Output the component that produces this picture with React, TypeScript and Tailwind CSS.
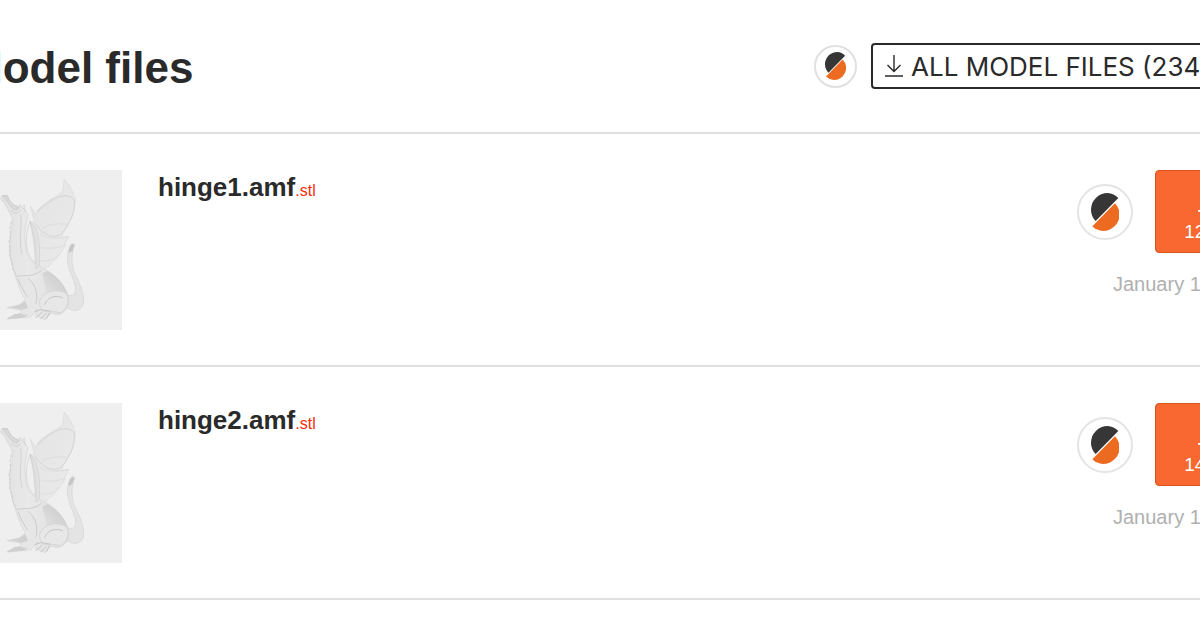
type ModelFile = {
  name: string;
  ext: string;
  size: string;
  date: string;
};

const files: ModelFile[] = [
  { name: 'hinge1.amf', ext: '.stl', size: '12 kB', date: 'January 13, 2022' },
  { name: 'hinge2.amf', ext: '.stl', size: '14 kB', date: 'January 13, 2022' },
];

function SlicerLogo({ className }: { className?: string }) {
  return (
    <svg viewBox="0 0 86 114" className={className} aria-hidden="true">
      <path d="M14 84A49 49 0 0 1 0 50A50 50 0 0 1 50 0A49 49 0 0 1 82 15Z" fill="#363636" />
      <path d="M72 31A49 49 0 0 1 86 64A50 50 0 0 1 36 114A49 49 0 0 1 4 100Z" fill="#ed6b21" />
    </svg>
  );
}

function DownloadIcon({ className }: { className?: string }) {
  return (
    <svg
      viewBox="0 0 18 22"
      fill="none"
      stroke="currentColor"
      strokeWidth="1.4"
      className={className}
      aria-hidden="true"
    >
      <path d="M9 0V16M2.5 10L9 16.5L15.5 10M0 21H18" />
    </svg>
  );
}

function DragonPreview() {
  return (
    <svg viewBox="-114 15 480 480" className="size-40 shrink-0 bg-[#efefef]" aria-hidden="true">
      <defs>
        <linearGradient id="body" x1="0" y1="0" x2="1" y2="0">
          <stop offset="0" stopColor="#e0e0e0" />
          <stop offset="0.4" stopColor="#e9e9e9" />
          <stop offset="1" stopColor="#dedede" />
        </linearGradient>
        <linearGradient id="wing" x1="0" y1="0" x2="1" y2="1">
          <stop offset="0" stopColor="#e3e3e3" />
          <stop offset="1" stopColor="#ebebeb" />
        </linearGradient>
        <linearGradient id="back" x1="1" y1="0" x2="0" y2="1">
          <stop offset="0" stopColor="#c6c6c6" />
          <stop offset="1" stopColor="#e4e4e4" />
        </linearGradient>
      </defs>
      <g strokeLinecap="round" strokeLinejoin="round">
        <path
          d="M116 132C138 108 172 94 186 82C193 68 189 54 193 43C207 57 220 82 226 103C225 140 211 173 187 205L186 219L206 214L193 240L196 241C181 268 157 296 123 322L104 300C94 260 88 210 88 172L104 170L91 124L106 146Z"
          fill="url(#wing)"
          stroke="#dadada"
          strokeWidth="2"
        />
        <path d="M112 140C142 112 194 72 222 104C228 140 211 170 187 205C160 224 130 212 106 176" fill="none" stroke="#d4d4d4" strokeWidth="3" />
        <path d="M122 208C140 222 166 222 204 215M124 248C150 252 174 248 195 241M122 288C146 290 166 284 178 268M128 190C144 178 168 174 202 178" fill="none" stroke="#d8d8d8" strokeWidth="2" />
        <path
          d="M216 236C204 248 200 276 204 296C210 330 232 360 226 382C220 396 206 392 196 386L204 430C226 442 244 436 250 416C254 388 240 356 226 330C214 304 212 270 224 240Z"
          fill="#e4e4e4"
          stroke="#d3d3d3"
          strokeWidth="2"
        />
        <path d="M216 236C209 243 206 252 206 264L217 258L224 240Z" fill="#c6c6c6" />
        <path
          d="M8 92L22 92C28 104 34 116 44 121L58 125L60 117L66 128L73 119L76 140L84 148L78 178C72 204 74 240 82 268C90 284 102 296 112 300L140 316C170 334 194 358 204 392C212 416 200 438 182 446C164 454 158 440 150 446L136 464L106 452L112 432L92 456L22 462L42 450L66 446L64 436L22 428L58 420L76 404C62 384 54 360 46 332C34 300 26 262 30 226C34 196 40 178 36 156L14 116L2 102Z"
          fill="url(#body)"
          stroke="#d3d3d3"
          strokeWidth="2"
        />
        <path d="M90 172C78 196 76 232 84 262C90 276 96 288 106 292C104 252 100 206 90 172Z" fill="#efefef" stroke="#d0d0d0" strokeWidth="2" />
        <path d="M90 168C112 188 122 230 118 302L108 312C110 262 106 212 90 168Z" fill="#e2e2e2" stroke="#cecece" strokeWidth="2" />
        <path d="M126 326L142 318C172 334 196 362 204 394C184 378 160 376 140 388C136 362 132 344 126 326Z" fill="url(#back)" />
        <path d="M54 336C66 332 84 338 98 354C110 374 112 400 104 422C98 438 92 448 84 454L68 448C78 428 88 412 86 394C74 376 62 358 54 336Z" fill="#e6e6e6" />
        <path d="M50 334C76 330 104 336 124 316M84 340C106 356 116 386 108 416M54 342C62 364 74 382 82 396" fill="none" stroke="#cccccc" strokeWidth="3" />
        <path d="M120 404C134 376 174 370 200 386C210 404 204 430 182 444C164 436 148 442 128 438C120 426 116 416 120 404Z" fill="#e7e7e7" stroke="#cecece" strokeWidth="2" />
        <path d="M134 418C144 394 166 390 188 398M104 440L122 434L150 438M108 458L126 442M122 462L138 446M140 460L148 444M24 460L60 446" fill="none" stroke="#c6c6c6" strokeWidth="3" />
        <path d="M58 420L76 408L84 428L66 434L30 426ZM22 462L46 446L84 450L70 458Z" fill="#d0d0d0" />
        <path d="M8 92L22 92C28 110 40 122 58 128C48 142 40 132 30 122L18 104Z" fill="#dadada" stroke="#c6c6c6" strokeWidth="2" />
        <path d="M34 136C42 146 54 148 62 136M70 130L78 142M62 150C68 180 54 220 66 268" fill="none" stroke="#d2d2d2" strokeWidth="3" />
        <path d="M34 170L30 190L32 210L27 230L31 250L29 270L36 290L38 310L48 330" fill="none" stroke="#cfcfcf" strokeWidth="3" strokeDasharray="8 6" />
      </g>
    </svg>
  );
}

function FileRow({ file }: { file: ModelFile }) {
  return (
    <li className="flex items-start border-b-2 border-[#e0e0e0] pt-9 pb-[35px]">
      <DragonPreview />
      <h2 className="ml-9 flex-1 text-[26px] leading-[34px] font-bold">
        {file.name}
        <span className="text-base font-normal text-[#fa2d0c]">{file.ext}</span>
      </h2>
      <div className="flex w-[185px] flex-col">
        <div className="flex items-center justify-between">
          <button
            type="button"
            aria-label={`Slice ${file.name}`}
            className="flex size-14 items-center justify-center rounded-full border-2 border-[#e4e4e4]"
          >
            <SlicerLogo className="h-[38px]" />
          </button>
          <button
            type="button"
            aria-label={`Download ${file.name}`}
            className="flex h-[83px] w-[107px] flex-col items-center justify-end gap-2 rounded-sm border border-[#d9531e] bg-[#fa6831] pb-2 text-[19px] leading-6 text-white"
          >
            <DownloadIcon className="h-[26px]" />
            {file.size}
          </button>
        </div>
        <p className="mt-[15px] ml-9 text-xl leading-8 whitespace-nowrap text-[#b0b0b0]">{file.date}</p>
      </div>
    </li>
  );
}

export default function App() {
  return (
    <div className="overflow-hidden bg-white font-['Liberation_Sans',Arial,sans-serif] text-[#2a2a2a]">
      <main className="-mr-[62px] -ml-[38px] pb-8">
        <header className="flex items-center justify-between border-b-2 border-[#e0e0e0] py-[43px]">
          <h1 className="pt-1 pl-1 text-[44px] leading-[42px] font-bold">Model files</h1>
          <div className="flex items-center gap-3.5">
            <button
              type="button"
              aria-label="Slice all model files"
              className="flex size-[43px] items-center justify-center rounded-full border-2 border-[#e0e0e0]"
            >
              <SlicerLogo className="h-7" />
            </button>
            <button
              type="button"
              className="flex h-[46px] w-[391px] items-center gap-2 rounded-sm border-2 border-[#2a2a2a] px-3 font-[Inter,sans-serif] text-[26px] whitespace-nowrap"
            >
              <DownloadIcon className="h-[22px] shrink-0" />
              ALL MODEL FILES (234)
            </button>
          </div>
        </header>
        <ul>
          {files.map((file) => (
            <FileRow key={file.name} file={file} />
          ))}
        </ul>
      </main>
    </div>
  );
}
